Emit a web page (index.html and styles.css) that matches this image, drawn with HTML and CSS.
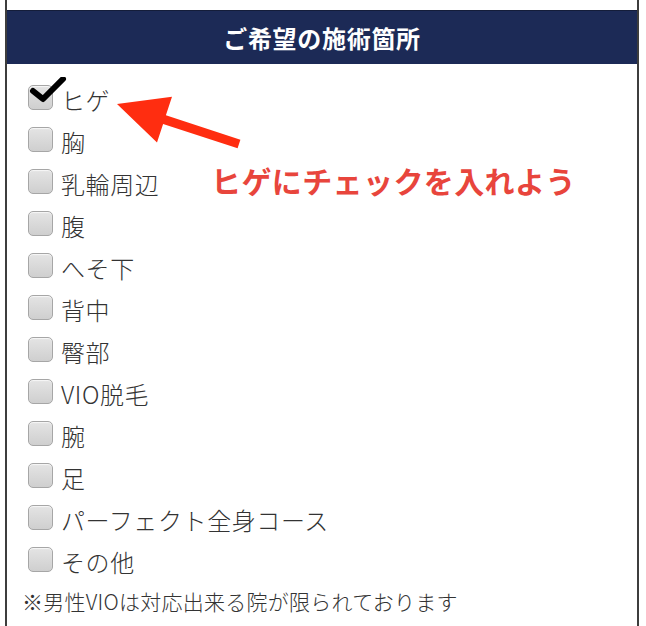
FILE: index.html
```html
<!DOCTYPE html>
<html lang="ja">
<head>
<meta charset="utf-8">
<title>ご希望の施術箇所</title>
<link rel="stylesheet" href="styles.css">
</head>
<body>
<div class="page">
  <section class="form-box">
    <h2 class="head">ご希望の施術箇所</h2>
    <ul class="list">
      <li class="item"><span class="box checked"><svg class="tick" viewBox="0 0 40 32" width="40" height="32"><path d="M4 14 L14 22 L34 2" fill="none" stroke="#000" stroke-width="6" stroke-linecap="round" stroke-linejoin="round"/></svg></span><span class="label">ヒゲ</span></li>
      <li class="item"><span class="box"></span><span class="label">胸</span></li>
      <li class="item"><span class="box"></span><span class="label">乳輪周辺</span></li>
      <li class="item"><span class="box"></span><span class="label">腹</span></li>
      <li class="item"><span class="box"></span><span class="label">へそ下</span></li>
      <li class="item"><span class="box"></span><span class="label">背中</span></li>
      <li class="item"><span class="box"></span><span class="label">臀部</span></li>
      <li class="item"><span class="box"></span><span class="label">VIO脱毛</span></li>
      <li class="item"><span class="box"></span><span class="label">腕</span></li>
      <li class="item"><span class="box"></span><span class="label">足</span></li>
      <li class="item"><span class="box"></span><span class="label">パーフェクト全身コース</span></li>
      <li class="item"><span class="box"></span><span class="label">その他</span></li>
    </ul>
    <p class="note">※男性VIOは対応出来る院が限られております</p>
  </section>
  <svg class="arrow" viewBox="0 0 646 626" width="646" height="626">
    <polygon points="117,104 172,96.8 165.9,115.3 240.4,139.7 237.6,148.3 163.1,123.9 157,142.4" fill="#ff2d10"/>
  </svg>
  <div class="callout">ヒゲにチェックを入れよう</div>
</div>
</body>
</html>
```

FILE: styles.css
```css
html, body {
  margin: 0;
  padding: 0;
  background: #fff;
}
body {
  font-family: "Noto Sans CJK JP", "Noto Sans", sans-serif;
  color: #333;
}
.page {
  position: relative;
  width: 646px;
  height: 626px;
  overflow: hidden;
}
.form-box {
  margin-left: 5px;
  width: 634px;
  box-sizing: border-box;
  border-left: 2px solid #3d3d3d;
  border-right: 2px solid #3d3d3d;
  padding-top: 10px;
  padding-bottom: 20px;
}
.head {
  margin: 0;
  height: 54px;
  background: #1c2a56;
  border-top: 1px solid #141d3a;
  box-sizing: border-box;
  color: #fff;
  font-size: 24px;
  font-weight: 700;
  letter-spacing: 0.7px;
  display: flex;
  align-items: center;
  justify-content: center;
}
.list {
  list-style: none;
  margin: 0;
  padding: 15px 0 0 21px;
}
.item {
  height: 42px;
  display: flex;
  align-items: center;
}
.box {
  position: relative;
  width: 25px;
  height: 25px;
  box-sizing: border-box;
  border: 1px solid #a6a6a6;
  border-radius: 5px;
  background: linear-gradient(#e4e4e4, #cfcfcf);
  box-shadow: inset 0 1px 1px rgba(255,255,255,0.7);
  margin-right: 8px;
  margin-bottom: 6px;
  flex: none;
}
.tick {
  position: absolute;
  left: 0;
  top: -9px;
}
.label {
  font-size: 24px;
  font-weight: 300;
  letter-spacing: 0.6px;
  line-height: 42px;
  color: #333;
}
.note {
  margin: 0;
  padding-left: 15px;
  font-size: 21px;
  font-weight: 300;
  letter-spacing: 0.25px;
  line-height: 36px;
  color: #333;
}
.arrow {
  position: absolute;
  left: 0;
  top: 0;
  pointer-events: none;
}
.callout {
  position: absolute;
  left: 211px;
  top: 162px;
  font-size: 30px;
  letter-spacing: 0.4px;
  line-height: 36px;
  font-weight: 700;
  color: #e8453c;
  white-space: nowrap;
}
```
